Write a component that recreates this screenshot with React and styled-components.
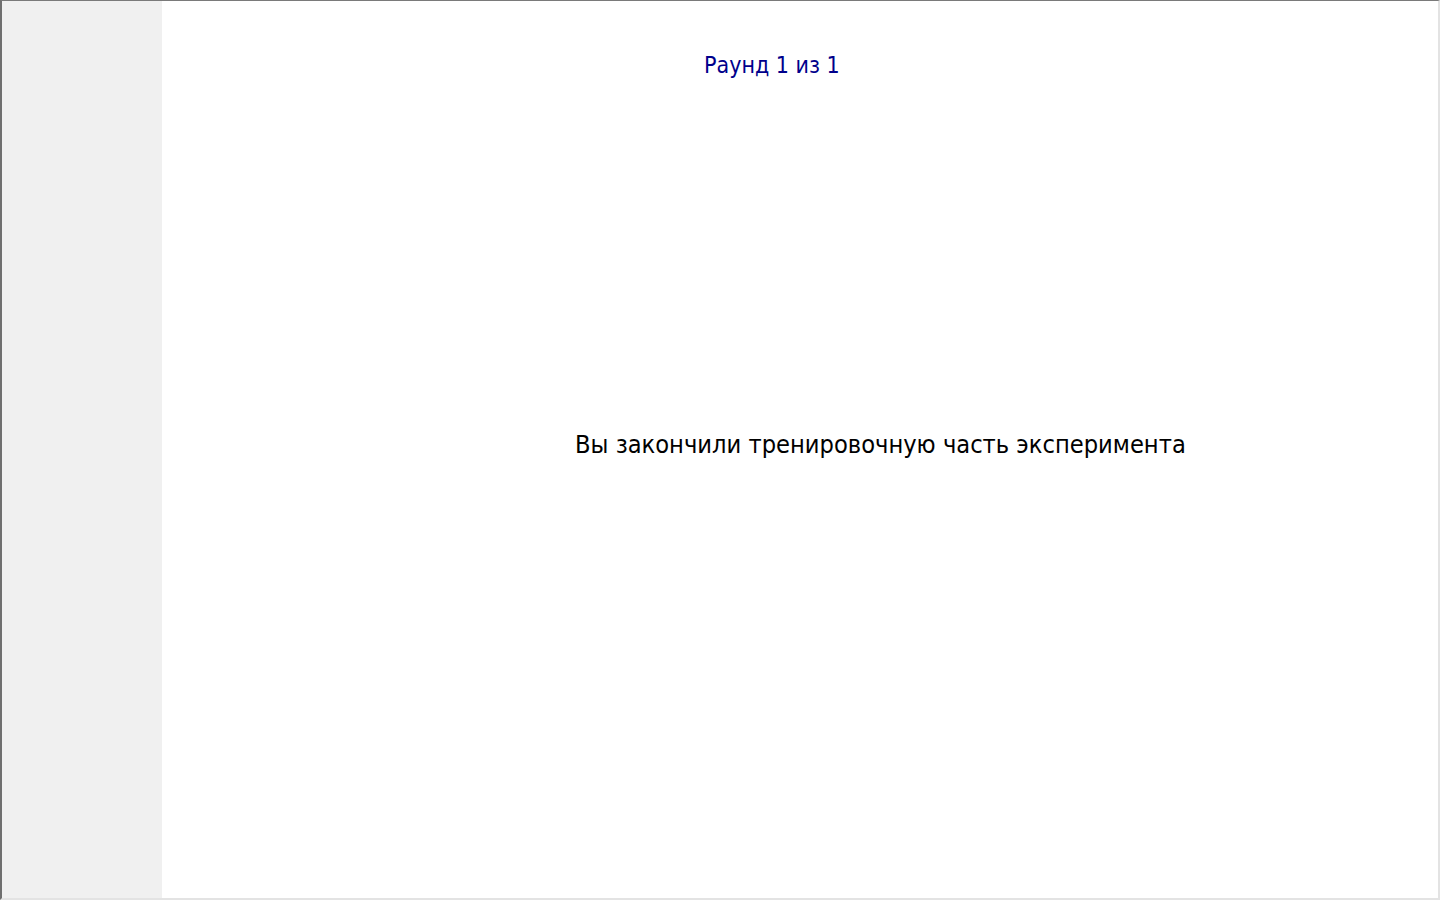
import React from "react";
import styled, { createGlobalStyle } from "styled-components";

const GlobalStyle = createGlobalStyle`
    html, body {
        margin: 0;
        padding: 0;
        background: #ffffff;
    }
    #root {
        height: 900px;
    }
`;

const Frame = styled.div`
    box-sizing: border-box;
    width: 1440px;
    height: 900px;
    display: flex;
    flex-direction: row;
    border-top: 1px solid #7a7a7a;
    border-left: 2px solid #6f6f6f;
    border-right: 2px solid #e3e3e3;
    border-bottom: 2px solid #e3e3e3;
    font-family: "DejaVu Sans", "Liberation Sans", sans-serif;
    font-stretch: condensed;
`;

const Sidebar = styled.div`
    width: 160px;
    flex-shrink: 0;
    background: #f0f0f0;
`;

const Main = styled.div`
    flex: 1;
    display: flex;
    flex-direction: column;
    background: #ffffff;
`;

const RoundTitle = styled.div`
    padding: 49px 0 0 542px;
    height: 30px;
    line-height: 30px;
    font-size: 23px;
    color: #00008b;
`;

const Message = styled.div`
    padding: 350px 0 0 413px;
    line-height: 30px;
    font-size: 25.2px;
    color: #000000;
`;

const App = () => {
    return (
        <>
            <GlobalStyle/>
            <Frame>
                <Sidebar/>
                <Main>
                    <RoundTitle>Раунд 1 из 1</RoundTitle>
                    <Message>Вы закончили тренировочную часть эксперимента</Message>
                </Main>
            </Frame>
        </>
    );
}

export default App;
